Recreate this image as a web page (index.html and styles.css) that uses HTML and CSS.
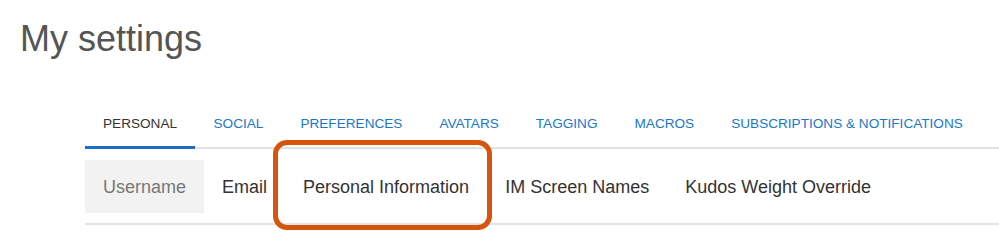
FILE: index.html
```html
<!DOCTYPE html>
<html>
<head>
<meta charset="utf-8">
<link rel="stylesheet" href="styles.css">
</head>
<body>
<h1 class="title">My settings</h1>
<div class="settings">
  <ul class="tabs">
    <li class="tab tab-active">PERSONAL</li>
    <li class="tab">SOCIAL</li>
    <li class="tab">PREFERENCES</li>
    <li class="tab">AVATARS</li>
    <li class="tab">TAGGING</li>
    <li class="tab">MACROS</li>
    <li class="tab">SUBSCRIPTIONS &amp; NOTIFICATIONS</li>
  </ul>
  <ul class="subtabs">
    <li class="subtab subtab-active">Username</li>
    <li class="subtab">Email</li>
    <li class="subtab subtab-highlight">Personal Information</li>
    <li class="subtab">IM Screen Names</li>
    <li class="subtab">Kudos Weight Override</li>
  </ul>
</div>
</body>
</html>
```

FILE: styles.css
```css
html, body {
  margin: 0;
  padding: 0;
  background: #ffffff;
  font-family: "Liberation Sans", Arial, sans-serif;
}

body {
  min-height: 245px;
}

.title {
  margin: 19px 0 0 20px;
  font-size: 36px;
  line-height: 40px;
  font-weight: normal;
  color: #555555;
}

.settings {
  margin: 39px 0 0 85px;
}

.tabs {
  list-style: none;
  margin: 0;
  padding: 0;
  display: flex;
  border-bottom: 2px solid #dfe3e6;
}

.tab {
  padding: 18px 18.5px 14px;
  font-size: 13.6px;
  line-height: 16px;
  color: #1a78cc;
  border-bottom: 3px solid transparent;
  margin-bottom: -2px;
  white-space: nowrap;
}

.tab:first-child {
  padding-left: 18px;
  padding-right: 18px;
}

.tab-active {
  color: #333333;
  border-bottom-color: #1a6fc4;
}

.subtabs {
  list-style: none;
  margin: 0;
  padding: 11px 0 10px;
  display: flex;
  border-bottom: 2px solid #e1e5e8;
}

.subtab {
  position: relative;
  padding: 2px 18px 0;
  height: 51px;
  font-size: 18px;
  line-height: 51px;
  color: #333333;
  white-space: nowrap;
}

.subtab-active {
  background: #f2f2f2;
  color: #777777;
}

.subtab-highlight::after {
  content: "";
  position: absolute;
  left: -12px;
  right: -5px;
  top: -20px;
  bottom: -17px;
  border: 5px solid #d6540c;
  border-radius: 14px;
}
```
